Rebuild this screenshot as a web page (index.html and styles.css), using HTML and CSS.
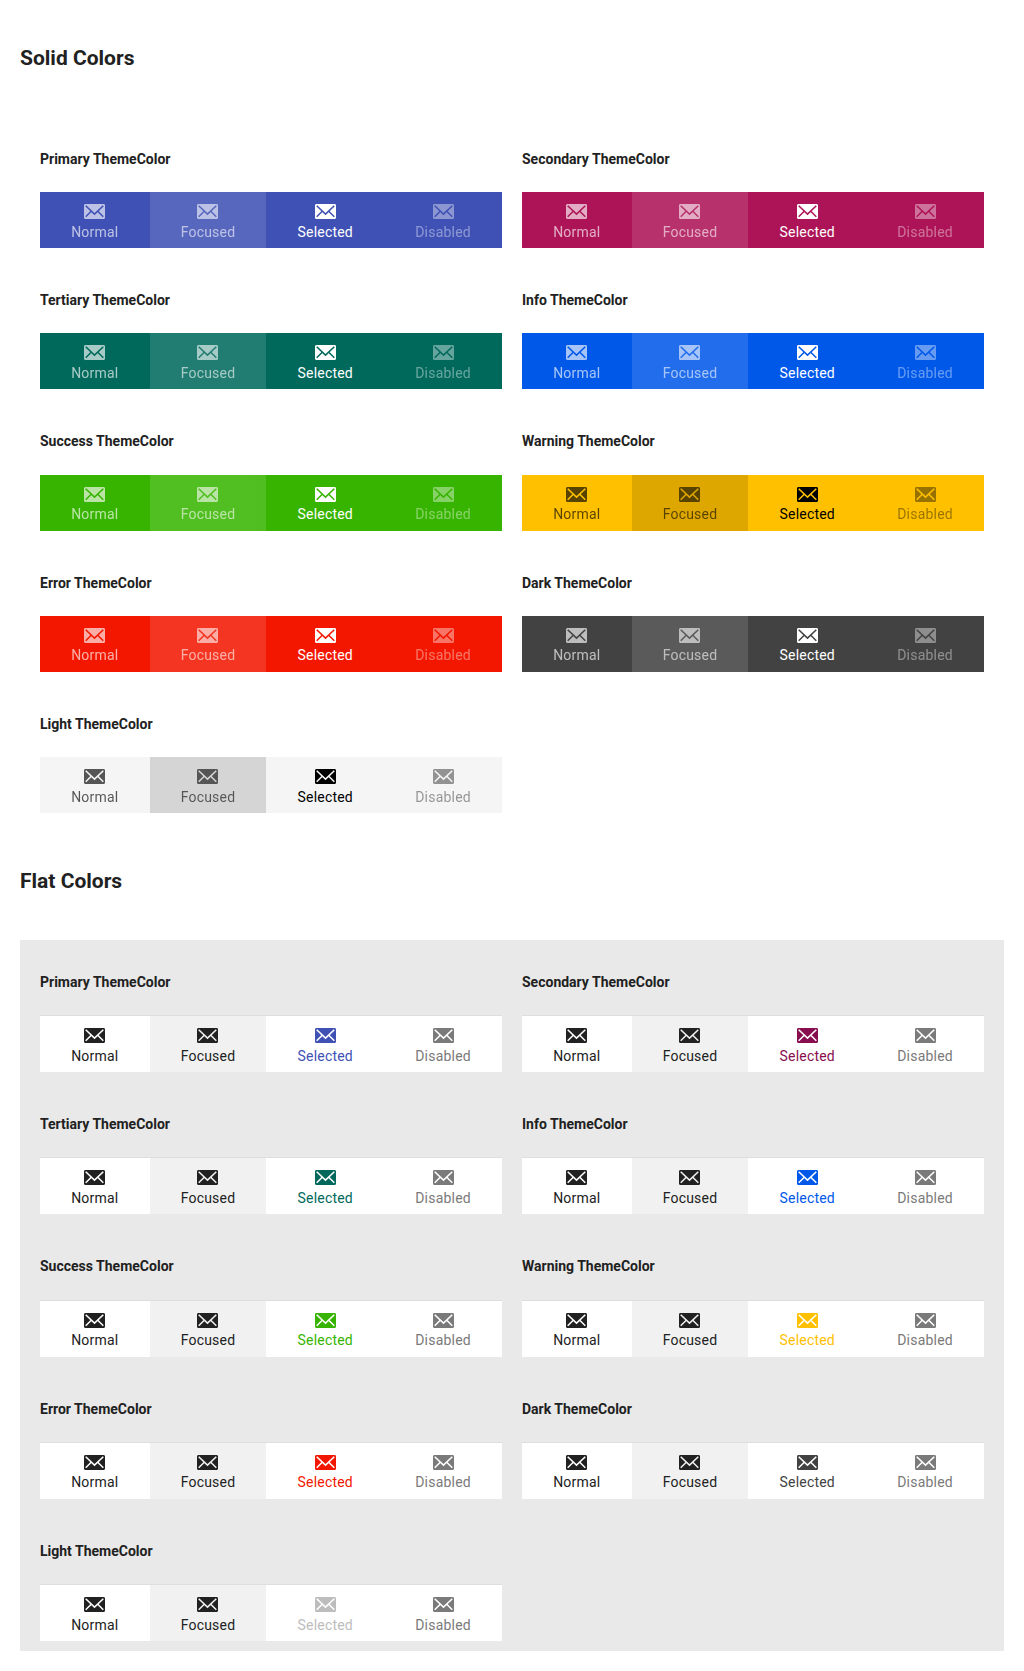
FILE: index.html
```
<!DOCTYPE html>
<html lang="en">
<head>
<meta charset="utf-8">
<title>BottomNavigation theme colors</title>
<link rel="stylesheet" href="styles.css">
</head>
<body>
<svg class="sprite" aria-hidden="true">
  <symbol id="envelope" viewBox="0 0 21 15">
    <mask id="cut">
      <rect width="21" height="15" rx="1" fill="#fff"/>
      <path d="M1.7 1.8 L10.5 10.1 L19.3 1.8 M1.7 12.7 L7.5 7 M19.3 12.7 L13.5 7" fill="none" stroke="#000" stroke-width="1.5"/>
    </mask>
    <rect width="21" height="15" rx="1" fill="currentColor" mask="url(#cut)"/>
  </symbol>
</svg>
<h2 class="heading">Solid Colors</h2>
<main class="board solid" id="solid"></main>
<h2 class="heading">Flat Colors</h2>
<main class="board flat" id="flat"></main>
<script src="main.js"></script>
</body>
</html>
```
FILE: styles.css
```
*, *::before, *::after { box-sizing: border-box; }

body {
  margin: 0;
  padding: 0 20px;
  background: #fff;
  color: #212121;
  font-family: Roboto, "Liberation Sans", sans-serif;
  font-size: 14px;
}

.sprite { display: block; width: 0; height: 0; }

.heading {
  margin: 0;
  padding-top: 42px;
  height: 117px;
  font-size: 21px;
  line-height: 32px;
  font-weight: 700;
}

.board {
  display: grid;
  grid-template-columns: 462px 462px;
  column-gap: 20px;
  padding: 0 20px;
}

.solid {
  grid-auto-rows: 141.25px;
  height: 706px;
}

.flat {
  grid-auto-rows: 142.25px;
  height: 711px;
  background: #e9e9e9;
}

.title {
  margin: 0;
  padding-top: 31.75px;
  height: 75px;
  font-size: 14px;
  line-height: 21px;
  font-weight: 700;
}

.bar { display: flex; }

.item {
  flex: 1 1 auto;
  display: flex;
  flex-direction: column;
  align-items: center;
  height: 56px;
  padding-top: 12px;
  line-height: 20px;
  letter-spacing: 0.2px;
}

.icon { display: block; width: 21px; height: 15px; margin-bottom: 2.6px; }

.solid .bar { background: var(--base); color: #fff; }
.solid .bar.on-light { color: #000; }
.solid .normal, .solid .focused { opacity: 0.65; }
.solid .disabled { opacity: 0.4; }
.solid .focused { background: rgba(255, 255, 255, 0.2); }
.solid .on-light .focused { background: rgba(0, 0, 0, 0.2); }

.flat .bar { border-top: 1px solid #dedede; background: #fff; }
.flat .focused { background: #f1f1f1; }
.flat .selected { color: var(--base); }
.flat .disabled { color: #7a7a7a; }

.primary { --base: #3f51b5; }
.secondary { --base: #ad1457; }
.flat .secondary { --base: #880e4f; }
.tertiary { --base: #00695c; }
.info { --base: #0058e9; }
.success { --base: #37b400; }
.warning { --base: #ffc000; }
.error { --base: #f31700; }
.dark { --base: #424242; }
.light { --base: #f5f5f5; }
.flat .light { --base: #bdbdbd; }
```
FILE: main.js
```
const themes = ["Primary", "Secondary", "Tertiary", "Info", "Success", "Warning", "Error", "Dark", "Light"];
const states = ["Normal", "Focused", "Selected", "Disabled"];

for (const id of ["solid", "flat"]) {
  document.getElementById(id).innerHTML = themes.map(theme => {
    const onLight = theme === "Warning" || theme === "Light" ? " on-light" : "";
    const items = states.map(state =>
      `<span class="item ${state.toLowerCase()}"><svg class="icon"><use href="#envelope"/></svg><span>${state}</span></span>`
    ).join("");
    return `<section><h4 class="title">${theme} ThemeColor</h4><nav class="bar ${theme.toLowerCase()}${onLight}">${items}</nav></section>`;
  }).join("");
}
```
